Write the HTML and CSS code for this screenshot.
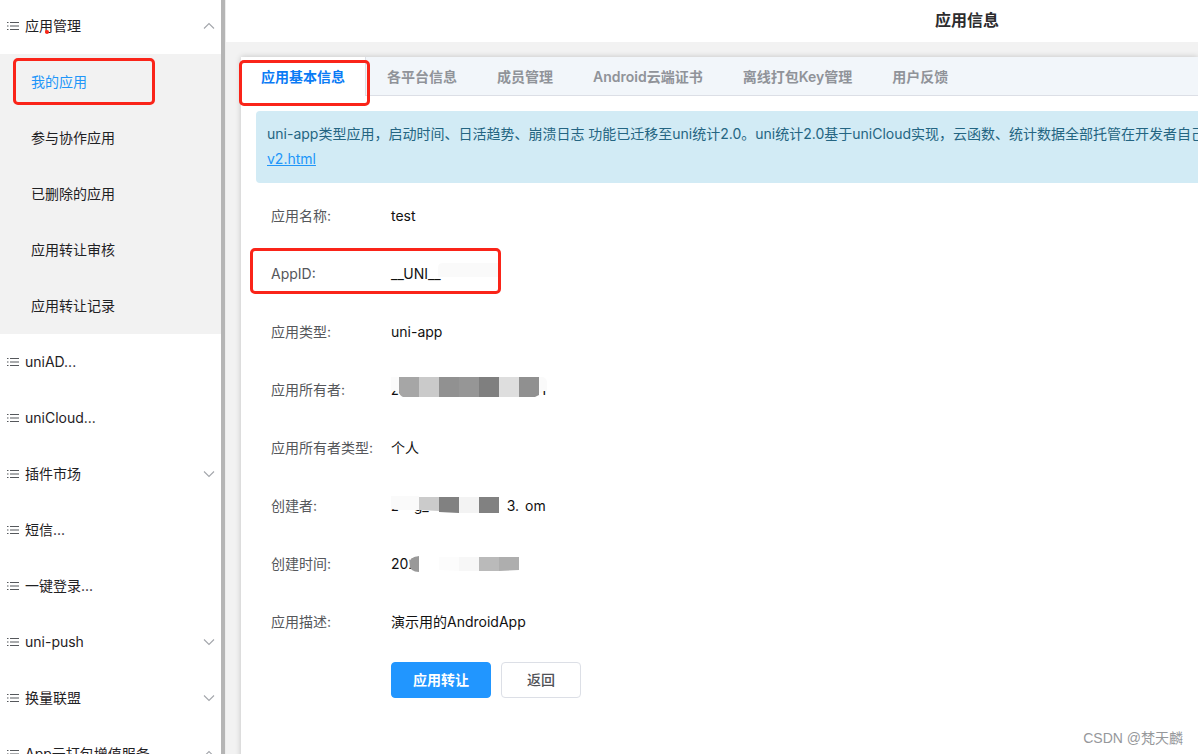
FILE: index.html
```html
<!DOCTYPE html>
<html lang="zh-CN">
<head>
<meta charset="utf-8">
<title>应用信息</title>
<link rel="stylesheet" href="styles.css">
</head>
<body>
<svg class="defs" aria-hidden="true">
  <symbol id="list" viewBox="0 0 12 10"><path d="M0 1.5h1.5M3 1.5h9M0 5h1.5M3 5h9M0 8.5h1.5M3 8.5h9" fill="none" stroke="#55585c" stroke-width="1.100"/></symbol>
  <symbol id="down" viewBox="0 0 12 8"><path d="M1 1.5l5 5 5-5" fill="none" stroke="#a3a6ab" stroke-width="1.1"/></symbol>
  <symbol id="up" viewBox="0 0 12 8"><path d="M1 6.500l5-5 5 5" fill="none" stroke="#a3a6ab" stroke-width="1.1"/></symbol>
</svg>
<div class="layout">
  <nav class="sidebar">
    <ul class="menu">
      <li>
        <a class="item" href="#"><svg class="list"><use href="#list"/></svg><span class="name">应用管理<i class="dot"></i></span><svg class="arrow"><use href="#up"/></svg></a>
        <ul class="submenu">
          <li><a class="subitem current" href="#">我的应用<i class="mark mark-menu"></i></a></li>
          <li><a class="subitem" href="#">参与协作应用</a></li>
          <li><a class="subitem" href="#">已删除的应用</a></li>
          <li><a class="subitem" href="#">应用转让审核</a></li>
          <li><a class="subitem" href="#">应用转让记录</a></li>
        </ul>
      </li>
      <li><a class="item" href="#"><svg class="list"><use href="#list"/></svg><span class="name">uniAD...</span></a></li>
      <li><a class="item" href="#"><svg class="list"><use href="#list"/></svg><span class="name">uniCloud...</span></a></li>
      <li><a class="item" href="#"><svg class="list"><use href="#list"/></svg><span class="name">插件市场</span><svg class="arrow"><use href="#down"/></svg></a></li>
      <li><a class="item" href="#"><svg class="list"><use href="#list"/></svg><span class="name">短信...</span></a></li>
      <li><a class="item" href="#"><svg class="list"><use href="#list"/></svg><span class="name">一键登录...</span></a></li>
      <li><a class="item" href="#"><svg class="list"><use href="#list"/></svg><span class="name">uni-push</span><svg class="arrow"><use href="#down"/></svg></a></li>
      <li><a class="item" href="#"><svg class="list"><use href="#list"/></svg><span class="name">换量联盟</span><svg class="arrow"><use href="#down"/></svg></a></li>
      <li><a class="item" href="#"><svg class="list"><use href="#list"/></svg><span class="name">App云打包增值服务</span><svg class="arrow"><use href="#up"/></svg></a></li>
    </ul>
  </nav>
  <main class="main">
    <header class="header"><h1>应用信息</h1></header>
    <section class="card">
      <div class="tabs" role="tablist">
        <button class="tab active" role="tab" aria-selected="true">应用基本信息<i class="mark mark-tab"></i></button>
        <button class="tab" role="tab">各平台信息</button>
        <button class="tab" role="tab">成员管理</button>
        <button class="tab" role="tab">Android云端证书</button>
        <button class="tab" role="tab">离线打包Key管理</button>
        <button class="tab" role="tab">用户反馈</button>
      </div>
      <div class="panel">
        <p class="notice">uni-app类型应用，启动时间、日活趋势、崩溃日志 功能已迁移至uni统计2.0。uni统计2.0基于uniCloud实现，云函数、统计数据全部托管在开发者自己<br><a href="#">v2.html</a></p>
        <dl class="info">
          <div class="row"><dt>应用名称:</dt><dd>test</dd></div>
          <div class="row"><dt>AppID:</dt><dd>__UNI__<svg class="mask" viewBox="0 0 160 36"><path d="M52 7h55v14H47v-9q0-5 5-5z" fill="#fafafa"/></svg></dd><dd class="mark mark-id"></dd></div>
          <div class="row"><dt>应用类型:</dt><dd>uni-app</dd></div>
          <div class="row"><dt>应用所有者:</dt><dd class="pieces owner"><span>zc</span><span>1</span><svg class="mask" viewBox="0 0 160 36"><path d="M0 5h8v16q-2-3-8-2z" fill="#fbfbfb"/><path d="M148 5h4q4 1 4 6v8h-4v2h-5z" fill="#fafafa"/><path d="M8 5h20v20H12q-3-1-4-5z" fill="#a6a6a6"/><path d="M28 5h20v20H28z" fill="#cacaca"/><path d="M48 5h20v20H48z" fill="#919191"/><path d="M68 5h20v20H68z" fill="#969696"/><path d="M88 5h20v20H88z" fill="#7f7f7f"/><path d="M108 5h20v20h-20z" fill="#dedede"/><path d="M128 5h20v18l-4 2h-16z" fill="#909090"/></svg></dd></div>
          <div class="row"><dt>应用所有者类型:</dt><dd>个人</dd></div>
          <div class="row"><dt>创建者:</dt><dd class="pieces creator"><span>z</span><span>g_</span><span>3.</span><span>om</span><svg class="mask" viewBox="0 0 160 36"><path d="M0 8h28v14H10l-10-1z" fill="#fafafa"/><path d="M28 9h20v14l-20-1z" fill="#cbcbcb"/><path d="M48 9h20v16l-20-1z" fill="#818181"/><path d="M68 9h20v16H68z" fill="#f3f3f3"/><path d="M88 9h20v16H88z" fill="#818181"/></svg></dd></div>
          <div class="row"><dt>创建时间:</dt><dd>202<svg class="mask" viewBox="0 0 160 36"><path d="M28 10v16q-9 0-10-8 1-8 10-8z" fill="#999"/><path d="M18 8h10v2q-9 0-10 8 0 3 1 4z" fill="#fff"/><path d="M48 11h20v14l-20-1z" fill="#fcfcfc"/><path d="M68 11h20v14H68z" fill="#f7f7f7"/><path d="M88 11h20v14H88z" fill="#bababa"/><path d="M108 11h20v13l-20 1z" fill="#aeaeae"/></svg></dd></div>
          <div class="row"><dt>应用描述:</dt><dd>演示用的AndroidApp</dd></div>
        </dl>
        <div class="actions"><button class="btn primary">应用转让</button><button class="btn back">返回</button></div>
      </div>
    </section>
  </main>
</div>
<span class="watermark">CSDN @梵天麟</span>
</body>
</html>
```
FILE: styles.css
```css
* { box-sizing: border-box; }
body {
  margin: 0;
  font: 14px/20px Inter, "Noto Sans CJK SC", sans-serif;
  color: #1f2124;
  background: #fff;
  overflow: hidden;
}
ul, dl, dd, p, h1 { margin: 0; padding: 0; }
ul { list-style: none; }
i { font-style: normal; }
a { text-decoration: none; color: inherit; }
button { font: inherit; cursor: pointer; }
.defs { display: none; }
.layout { display: flex; height: 100vh; }

.sidebar {
  flex: 0 0 225px;
  border-right: 4px solid #b5b5b5;
  overflow: hidden;
}
.menu { margin-top: -2px; }
.item {
  display: flex;
  align-items: center;
  gap: 6px;
  height: 56px;
  padding: 0 6px 0 7px;
}
.list { flex: none; width: 12px; height: 10px; }
.name { position: relative; flex: 1; }
.arrow { width: 12px; height: 8px; }
.submenu { background: #f2f2f2; }
.subitem {
  position: relative;
  display: flex;
  align-items: center;
  height: 56px;
  padding-left: 31px;
}
.current { color: #2196f9; }

.mark {
  position: absolute;
  border: 3px solid #fa2419;
  border-radius: 5px;
  pointer-events: none;
}
.mark-menu { left: 13px; right: 66px; top: 4px; bottom: 5px; }
.mark-tab { left: -2px; right: -5px; top: 3px; bottom: -10px; z-index: 1; }
.mark-id { width: 251px; top: -8px; bottom: -2px; }
.dot {
  position: absolute;
  left: 20px;
  top: 14px;
  width: 4px;
  height: 4px;
  border-radius: 50%;
  background: #fa2419;
}

.main {
  flex: 1;
  min-width: 0;
  background: #f2f2f2;
  border-left: 1px solid #ececec;
  overflow: hidden;
}
.header {
  width: calc(100% + 510px);
  height: 42px;
  padding: 10px 0;
  background: #fff;
  text-align: center;
}
h1 { font-size: 16px; line-height: 20px; font-weight: 600; color: #2c2c2e; }
.card {
  height: 100%;
  margin: 15px 0 0 15px;
  background: #fff;
  box-shadow: 0 0 6px rgba(0, 0, 0, .2);
}
.tabs {
  display: flex;
  height: 39px;
  background: #f2f6fa;
  border-bottom: 1px solid #dcdfe6;
}
.tab {
  position: relative;
  flex: none;
  height: 39px;
  padding: 0 20px;
  border: 0;
  background: none;
  color: #909399;
  font-weight: 600;
  white-space: nowrap;
}
.tab.active {
  margin-right: 2px;
  background: #fff;
  color: #0a7bf5;
  box-shadow: 1px 0 #dcdfe6;
}
.panel { padding: 15px 0 0 15px; }
.notice {
  padding: 10px 0 12px 11px;
  border-radius: 4px 0 0 4px;
  background: #d2ebf5;
  color: #246582;
  line-height: 25px;
  white-space: nowrap;
  overflow: hidden;
}
.notice a { color: #2196f9; text-decoration: underline; }
.info { display: grid; gap: 22px; padding: 15px 0 22px 15px; }
.row { position: relative; display: flex; line-height: 36px; }
.row dt { flex: 0 0 120px; color: #55575b; white-space: nowrap; }
.row dd { color: #111; }
.row dd:not(.mark) { position: relative; }
.row .mark-id { left: -21px; }
.pieces { display: flex; }
.owner { gap: 134px; }
.creator span:nth-child(2) { margin-left: 15px; }
.creator span:nth-child(3) { margin-left: 78px; }
.creator span:nth-child(4) { margin-left: 6px; }
.mask { position: absolute; left: 0; top: 0; width: 160px; height: 36px; }
.actions { display: flex; gap: 10px; padding-left: 135px; }
.btn { height: 36px; border-radius: 4px; border: 1px solid #dcdfe6; background: #fff; color: #505256; font-weight: 500; }
.primary { width: 100px; background: #2196ff; border-color: #2196ff; color: #fff; font-weight: 600; }
.back { width: 80px; }
.watermark {
  position: absolute;
  right: 15px;
  bottom: 6px;
  font: 14px/20px "Liberation Sans", "Noto Sans CJK SC", sans-serif;
  color: #96989b;
}
```
